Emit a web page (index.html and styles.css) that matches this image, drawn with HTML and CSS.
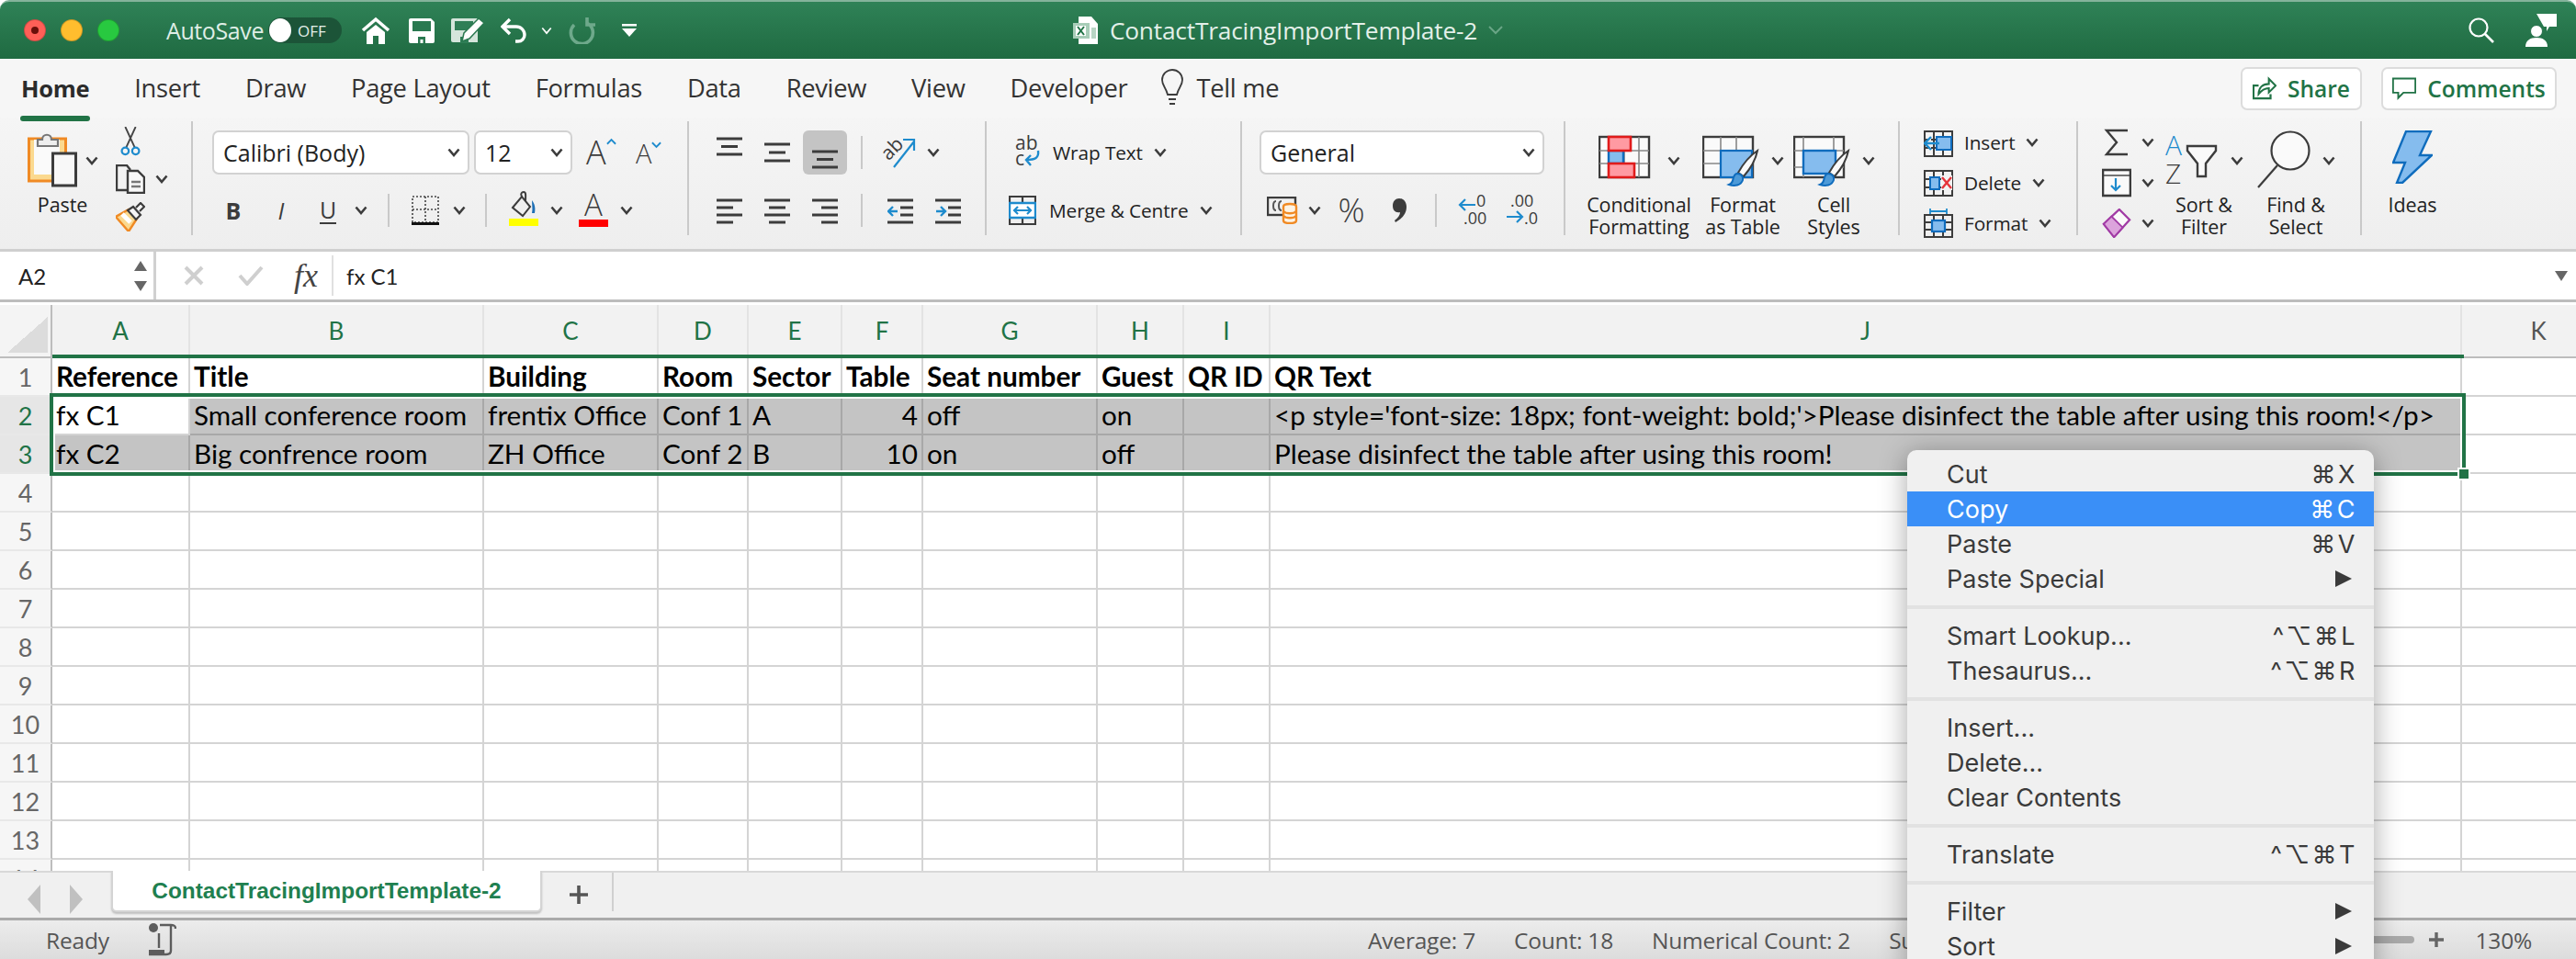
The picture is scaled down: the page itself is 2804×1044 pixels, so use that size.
FILE: index.html
```html
<!DOCTYPE html>
<html lang="en">
<head>
<meta charset="utf-8">
<title>ContactTracingImportTemplate-2</title>
<link rel="stylesheet" href="styles.css">
</head>
<body>
<svg class="sprite" aria-hidden="true">
  <symbol id="chev" viewBox="0 0 14 10"><path d="M1.5 1.5 7 8l5.500-6.500" fill="none" stroke="#3c3c3c" stroke-width="2.6"/></symbol>
  <symbol id="menu-arrow" viewBox="0 0 18 18"><path d="M0 0 18 9 0 18Z" fill="#3a3a3a"/></symbol>
</svg>
<div class="app">
  <header class="titlebar">
    <div class="tb-left">
      <span class="light red"><i></i></span><span class="light amber"></span><span class="light green"></span>
      <span class="autosave">AutoSave</span>
      <span class="toggle"><b></b><em>OFF</em></span>
      <svg class="qa home" viewBox="0 0 32 30"><path d="M2 15 16 3l14 12" fill="none" stroke="#fff" stroke-width="3.600"/><path d="M6 17 16 9l10 8v13h-7v-9h-6v9H6Z" fill="#fff"/></svg>
      <svg class="qa save" viewBox="0 0 28 27"><path d="M2 0h22l4 4v21a2 2 0 0 1-2 2H2a2 2 0 0 1-2-2V2a2 2 0 0 1 2-2Z" fill="#fff"/><rect x="4" y="3" width="20" height="11" fill="#2a7950"/><rect x="8" y="18" width="12" height="9" fill="#fff"/><path d="M10 27v-7h8v7h-2.500v-4h-3v4Z" fill="#2a7950"/></svg>
      <svg class="qa edit" viewBox="0 0 36 28"><path d="M2 1h26l1 1v25H2a2 2 0 0 1-2-2V3a2 2 0 0 1 2-2Z" fill="#d4e5db"/><rect x="4" y="4" width="20" height="10" fill="#2f7e56"/><rect x="10" y="21" width="9" height="7" fill="#2f7e56"/><path d="M30 1l6 5-16 17-8 3 2-9Z" fill="#fff" stroke="#2a7950" stroke-width="1.500"/></svg>
      <svg class="qa undo" viewBox="0 0 30 28"><path d="M10 2 2 10l8 8M2 10h15a9 9 0 0 1 9 9 7 7 0 0 1-7 7h-3" fill="none" stroke="#fff" stroke-width="3.400"/></svg>
      <svg class="qa-chev" viewBox="0 0 14 10"><path d="M1.500 1.500 7 8l5.500-6.500" fill="none" stroke="#fff" stroke-width="2"/></svg>
      <svg class="qa redo" viewBox="0 0 30 30"><path d="M6 9a12 12 0 1 0 14-2M20 1v8h9" fill="none" stroke="#6ea98b" stroke-width="3.600"/></svg>
      <svg class="qa more" viewBox="0 0 16 14"><rect width="16" height="2.500" fill="#fff"/><path d="M0 5h16l-8 9Z" fill="#fff"/></svg>
    </div>
    <div class="tb-title">
      <svg class="doc-icon" viewBox="0 0 28 30"><path d="M6 0h14l7 8v22H6Z" fill="#fff"/><rect y="7" width="18" height="17" fill="#a8cdb8"/><rect x="3" y="10" width="11" height="11" fill="#fff"/><path d="m5 11 7 9m0-9-7 9" stroke="#217346" stroke-width="2"/><path d="M20 12h5v12h-5Z" fill="#b8d5c4"/></svg>
      <span class="doc-name">ContactTracingImportTemplate-2</span>
      <svg class="doc-chev" viewBox="0 0 16 10"><path d="m1 1 7 7 7-7" fill="none" stroke="#6aa586" stroke-width="2"/></svg>
    </div>
    <div class="tb-right">
      <svg class="search" viewBox="0 0 28 28"><circle cx="11" cy="11" r="9.500" fill="none" stroke="#fff" stroke-width="2.200"/><path d="m18 18 9 9" stroke="#fff" stroke-width="2.600"/></svg>
      <svg class="person" viewBox="0 0 34 36"><path d="M12 0h22v14H26l-3 5v-5h-3" fill="#fff"/><circle cx="12" cy="19" r="6.500" fill="#fff" stroke="#24704a" stroke-width="1"/><path d="M0 36c0-7 5-10 12-10s12 3 12 10Z" fill="#fff"/></svg>
    </div>
  </header>

  <nav class="tabs">
    <span class="tab active">Home</span><span class="tab">Insert</span><span class="tab">Draw</span><span class="tab">Page Layout</span><span class="tab">Formulas</span><span class="tab">Data</span><span class="tab">Review</span><span class="tab">View</span><span class="tab">Developer</span>
    <span class="tell">
      <svg class="bulb" viewBox="0 0 24 42"><path d="M7 28C5 20 1 18 1 12a11 11 0 0 1 22 0c0 6-4 8-6 16Z" fill="none" stroke="#3c3c3c" stroke-width="1.800"/><path d="M8 33h8M9 38h6" stroke="#3c3c3c" stroke-width="2.200"/></svg>
      <span class="tab">Tell me</span>
    </span>
    <span class="tab-actions">
      <span class="btn share-btn"><svg class="btn-ico" viewBox="0 0 28 26"><path d="M7 10H1v15h20v-5" fill="none" stroke="#217346" stroke-width="2.400"/><path d="M7 20c0-8 5-12 12-12V2l8 8-8 8v-5c-6 0-9 3-12 7Z" fill="none" stroke="#217346" stroke-width="2.200"/></svg>Share</span>
      <span class="btn comments-btn"><svg class="btn-ico" viewBox="0 0 32 28"><path d="M1 1h30v19H15l-7 7v-7H1Z" fill="none" stroke="#217346" stroke-width="2.400"/></svg>Comments</span>
    </span>
  </nav>

  <section class="ribbon">
    <div class="group g-clip">
      <div class="big">
        <div class="big-top">
          <svg class="i-paste" viewBox="0 0 54 62"><rect x="1.500" y="9" width="40" height="46" fill="#fbd98f" stroke="#f08a24" stroke-width="3"/><rect x="7" y="10" width="28" height="38" fill="#fafafa"/><path d="M11 17V10h5c0-7 10-7 10 0h7v7Z" fill="#eee" stroke="#777" stroke-width="2.200"/><rect x="27.500" y="25" width="25" height="35" fill="#f8f8f8" stroke="#3c3c3c" stroke-width="3"/></svg>
          <svg class="chev chev-up"><use href="#chev"/></svg>
        </div>
        <span class="lbl">Paste</span>
      </div>
      <div class="stack">
        <div class="stack-row"><svg class="i32" viewBox="0 0 32 34"><path d="M10 0 21 24M22 0 11 24" stroke="#444" stroke-width="2" fill="none"/><circle cx="10" cy="28" r="4" fill="none" stroke="#1e8bcd" stroke-width="2.400"/><circle cx="22" cy="28" r="4" fill="none" stroke="#1e8bcd" stroke-width="2.400"/></svg></div>
        <div class="stack-row"><svg class="i32" viewBox="0 0 32 32"><path d="M14 28H1V1h11l4 5" fill="none" stroke="#3c3c3c" stroke-width="2.400"/><path d="M13 7h11l7 7v17H13Z" fill="#f8f8f8" stroke="#3c3c3c" stroke-width="2.400"/><path d="M17 19h10M17 24h10" stroke="#777" stroke-width="2.400"/></svg><svg class="chev chev-copy"><use href="#chev"/></svg></div>
        <div class="stack-row"><svg class="i32" viewBox="0 0 32 32"><path d="M0 16 14 8l9 10-9 14Z" fill="#fbd98f" stroke="#f08a24" stroke-width="2.400"/><path d="M7 13l9 9" stroke="#fff" stroke-width="5"/><path d="M13 9l6-4 8 9-5 5Z" fill="#f5f5f5" stroke="#3c3c3c" stroke-width="2.200"/><path d="M22 6l5-5 4 4-5 5" fill="#f5f5f5" stroke="#3c3c3c" stroke-width="2.200"/></svg></div>
      </div>
    </div>

    <div class="group g-font">
      <div class="row">
        <span class="select s-font">Calibri (Body)<svg class="chev"><use href="#chev"/></svg></span>
        <span class="select s-size">12<svg class="chev"><use href="#chev"/></svg></span>
        <span class="grow-a">A<svg class="caret" viewBox="0 0 12 8"><path d="m1 7 5-5 5 5" fill="none" stroke="#1e8bcd" stroke-width="2"/></svg></span>
        <span class="shrink-a">A<svg class="caret" viewBox="0 0 12 8"><path d="m1 1 5 5 5-5" fill="none" stroke="#1e8bcd" stroke-width="2"/></svg></span>
      </div>
      <div class="row grid-font">
        <span class="fmt bold">B</span><span class="fmt ital">I</span><span class="fmt under">U</span>
        <svg class="chev"><use href="#chev"/></svg><i class="vsep"></i>
        <svg class="i-border" viewBox="0 0 30 46"><path d="M1 8h28v28H1ZM15 8v28M1 22h28" fill="none" stroke="#444" stroke-width="1.600" stroke-dasharray="2 2"/><rect y="36" width="30" height="3" fill="#111"/></svg>
        <svg class="chev"><use href="#chev"/></svg><i class="vsep"></i>
        <svg class="i-fill" viewBox="0 0 32 48"><path d="M4 21 14 9l9 11-8 10Z" fill="none" stroke="#3c3c3c" stroke-width="2"/><path d="M14 9c-2-3 0-5 2-5 3 0 2 5 2 10" fill="none" stroke="#3c3c3c" stroke-width="2"/><path d="M25 13c3 4 4 8 3 14h-3c1-4 0-9 0-14Z" fill="#1e6fb5"/><rect y="33" width="32" height="8" fill="#ff0"/></svg>
        <svg class="chev"><use href="#chev"/></svg>
        <span class="i-color"><span>A</span><i></i></span>
        <svg class="chev"><use href="#chev"/></svg>
      </div>
    </div>

    <div class="group g-align">
      <div class="row grid-align1">
        <svg class="i-al" viewBox="0 0 28 48"><path d="M0 9h28M5 17.500h18M0 26h28" stroke="#3c3c3c" stroke-width="3"/></svg>
        <svg class="i-al" viewBox="0 0 28 48"><path d="M0 15h28M5 24h18M0 33h28" stroke="#3c3c3c" stroke-width="3"/></svg>
        <span class="al-on"><svg class="i-al" viewBox="0 0 28 48"><path d="M0 23h28M5 31.500h18M0 40h28" stroke="#3c3c3c" stroke-width="3"/></svg></span>
        <i class="vsep"></i>
        <svg class="i-orient" viewBox="0 0 36 34"><text class="svg-t" x="0" y="22" transform="rotate(-45 8 18)">ab</text><path d="M11 33 33 5M21 3h12v12" fill="none" stroke="#1e8bcd" stroke-width="2.200"/></svg>
        <svg class="chev"><use href="#chev"/></svg>
      </div>
      <div class="row grid-align2">
        <svg class="i-al" viewBox="0 0 28 48"><path d="M0 13h28M0 21h18M0 29h28M0 37h18" stroke="#3c3c3c" stroke-width="3"/></svg>
        <svg class="i-al" viewBox="0 0 28 48"><path d="M0 13h28M5 21h18M0 29h28M5 37h18" stroke="#3c3c3c" stroke-width="3"/></svg>
        <svg class="i-al" viewBox="0 0 28 48"><path d="M0 13h28M10 21h18M0 29h28M10 37h18" stroke="#3c3c3c" stroke-width="3"/></svg>
        <i class="vsep"></i>
        <svg class="i-al" viewBox="0 0 28 48"><path d="M0 13h28M14 21h14M14 29h14M0 37h28" stroke="#3c3c3c" stroke-width="3"/><path d="M11 25H1m5-5-5 5 5 5" fill="none" stroke="#1e8bcd" stroke-width="2.400"/></svg>
        <svg class="i-al" viewBox="0 0 28 48"><path d="M0 13h28M14 21h14M14 29h14M0 37h28" stroke="#3c3c3c" stroke-width="3"/><path d="M1 25h10m-5-5 5 5-5 5" fill="none" stroke="#1e8bcd" stroke-width="2.400"/></svg>
      </div>
    </div>

    <div class="group g-wrap">
      <div class="row flexrow">
        <svg class="i-wrap" viewBox="0 0 30 34"><text class="svg-t" x="3" y="14">ab</text><text class="svg-t" x="3" y="31">c</text><path d="M28 15c1 8-3 10-13 10m5-5-5 5 5 6" fill="none" stroke="#1e8bcd" stroke-width="2.400"/></svg>
        <span class="lbl-s">Wrap Text</span><svg class="chev"><use href="#chev"/></svg>
      </div>
      <div class="row flexrow">
        <svg class="i-merge" viewBox="0 0 30 32"><path d="M1 1h28v30H1ZM15 1v7M15 25v6" fill="none" stroke="#3c3c3c" stroke-width="2.200"/><path d="M1 8h28v16H1Z" fill="#fff" stroke="#1e8bcd" stroke-width="2.400"/><path d="M6 16h18M10 12l-4 4 4 4M20 12l4 4-4 4" fill="none" stroke="#1e8bcd" stroke-width="2.200"/></svg>
        <span class="lbl-s">Merge &amp; Centre</span><svg class="chev"><use href="#chev"/></svg>
      </div>
    </div>

    <div class="group g-num">
      <div class="row">
        <span class="select s-num">General<svg class="chev"><use href="#chev"/></svg></span>
      </div>
      <div class="row grid-num">
        <svg class="i-acct" viewBox="0 0 34 30"><rect x="1" y="1" width="30" height="19" fill="none" stroke="#3c3c3c" stroke-width="2.400"/><path d="M10 5c-4 0-4 10 0 10M16 5c-4 0-4 10 0 10" fill="none" stroke="#555" stroke-width="2"/><path d="M18 11c0-4 14-4 14 0v15c0 4-14 4-14 0Z" fill="#fdf3e4" stroke="#f08a24" stroke-width="2.400"/><path d="M18 16c3 3 11 3 14 0M18 21c3 3 11 3 14 0" fill="none" stroke="#f08a24" stroke-width="2.400"/></svg>
        <svg class="chev"><use href="#chev"/></svg>
        <span class="pct">%</span>
        <svg class="i-comma" viewBox="0 0 16 26"><path d="M7 0c5 0 8 4 8 9 0 8-5 13-12 17l-1-2c4-3 6-6 6-9-5 1-8-2-8-7 0-5 3-8 7-8Z" fill="#3c3c3c"/></svg>
        <i class="vsep"></i>
        <svg class="i-dec" viewBox="0 0 34 36"><text class="svg-s" x="20" y="14">0</text><text class="svg-s" x="6" y="33">.00</text><path d="M19 12H2m6-6-6 6 6 6" fill="none" stroke="#1e8bcd" stroke-width="2.200"/></svg>
        <svg class="i-dec" viewBox="0 0 34 36"><text class="svg-s" x="5" y="14">.00</text><text class="svg-s" x="20" y="33">.0</text><path d="M1 25h17m-6-6 6 6-6 6" fill="none" stroke="#1e8bcd" stroke-width="2.200"/></svg>
      </div>
    </div>

    <div class="group g-styles">
      <div class="big">
        <div class="big-top">
          <svg class="i-style" viewBox="0 0 62 62"><rect x="1" y="7" width="54" height="44" fill="#fafafa" stroke="#3c3c3c" stroke-width="2.400"/><path d="M11 7v44M44 7v44M1 22h54M1 36h54M28 22v14" stroke="#888" stroke-width="1.600"/><rect x="11" y="22" width="16" height="14" fill="#85bcee" stroke="#0f6cbd" stroke-width="2.400"/><rect x="11" y="7" width="24" height="15" fill="#ff9aa2" stroke="#e01b1b" stroke-width="2.600"/><rect x="11" y="36" width="28" height="15" fill="#ff9aa2" stroke="#e01b1b" stroke-width="2.600"/></svg>
          <svg class="chev chev-big"><use href="#chev"/></svg>
        </div>
        <span class="lbl">Conditional<br>Formatting</span>
      </div>
      <div class="big">
        <div class="big-top">
          <svg class="i-style" viewBox="0 0 62 62"><rect x="1" y="7" width="54" height="44" fill="#fafafa" stroke="#3c3c3c" stroke-width="2.400"/><path d="M20 7v44M37 7v44M1 22h54M1 36h54" stroke="#888" stroke-width="1.600"/><rect x="20" y="22" width="34" height="29" fill="#85bcee" stroke="#0f6cbd" stroke-width="2.200"/><path d="M60 22c-2 10-8 20-15 28l-6-4c5-9 12-18 21-24Z" fill="#fafafa" stroke="#3c3c3c" stroke-width="2"/><path d="M38 47c4 0 7 3 6 7-2 6-9 7-15 5 5-2 4-6 5-8 1-3 2-4 4-4Z" fill="#4d9ad8" stroke="#0f6cbd" stroke-width="2"/></svg>
          <svg class="chev chev-big"><use href="#chev"/></svg>
        </div>
        <span class="lbl">Format<br>as Table</span>
      </div>
      <div class="big">
        <div class="big-top">
          <svg class="i-style" viewBox="0 0 62 62"><rect x="1" y="7" width="54" height="44" fill="#fafafa" stroke="#3c3c3c" stroke-width="2.400"/><path d="M11 7v44M44 7v44M1 22h54M1 40h54" stroke="#888" stroke-width="1.600"/><rect x="11" y="22" width="35" height="25" fill="#85bcee" stroke="#0f6cbd" stroke-width="2.400"/><path d="M60 22c-2 10-8 20-15 28l-6-4c5-9 12-18 21-24Z" fill="#fafafa" stroke="#3c3c3c" stroke-width="2"/><path d="M38 47c4 0 7 3 6 7-2 6-9 7-15 5 5-2 4-6 5-8 1-3 2-4 4-4Z" fill="#4d9ad8" stroke="#0f6cbd" stroke-width="2"/></svg>
          <svg class="chev chev-big"><use href="#chev"/></svg>
        </div>
        <span class="lbl">Cell<br>Styles</span>
      </div>
    </div>

    <div class="group g-cells">
      <div class="stack-row tall"><svg class="i-cell" viewBox="0 0 32 32"><path d="M1 4h30v27H1ZM11 4v27M21 4v27M1 13h30M1 22h30" fill="none" stroke="#3c3c3c" stroke-width="2"/><rect x="14" y="10" width="16" height="14" fill="#85bcee" stroke="#0f6cbd" stroke-width="2"/><path d="M17 17H1m7-7-7 7 7 7" fill="#eee" stroke="#1e8bcd" stroke-width="2.400"/></svg><span class="lbl-s">Insert</span><svg class="chev"><use href="#chev"/></svg></div>
      <div class="stack-row tall"><svg class="i-cell" viewBox="0 0 32 32"><path d="M1 3h30v27H1ZM11 3v27M21 3v27M1 12h30M1 21h30" fill="none" stroke="#3c3c3c" stroke-width="2"/><rect x="7" y="10" width="10" height="13" fill="#85bcee" stroke="#0f6cbd" stroke-width="2"/><rect x="19" y="8" width="12" height="16" fill="#f2f2f2"/><path d="m20 10 10 12m0-12-10 12" stroke="#e5333a" stroke-width="2.400"/></svg><span class="lbl-s">Delete</span><svg class="chev"><use href="#chev"/></svg></div>
      <div class="stack-row tall"><svg class="i-cell" viewBox="0 0 32 32"><path d="M1 7h30v24H1ZM11 7v24M21 7v24M1 15h30M1 23h30" fill="none" stroke="#3c3c3c" stroke-width="2"/><rect x="9" y="13" width="14" height="12" fill="#85bcee" stroke="#0f6cbd" stroke-width="2.200"/><path d="M7 3h18M7 0v6M25 0v6" fill="none" stroke="#1e8bcd" stroke-width="1.800"/></svg><span class="lbl-s">Format</span><svg class="chev"><use href="#chev"/></svg></div>
    </div>

    <div class="group g-edit">
      <div class="stack edit-stack">
        <div class="stack-row tall"><svg class="i-cell" viewBox="0 0 32 32"><path d="M28 3H5l11 13L5 29h23" fill="none" stroke="#3c3c3c" stroke-width="2.400"/></svg><svg class="chev chev-edit"><use href="#chev"/></svg></div>
        <div class="stack-row tall"><svg class="i-cell" viewBox="0 0 32 32"><rect x="1" y="2" width="30" height="28" fill="#fafafa" stroke="#3c3c3c" stroke-width="2.600"/><path d="M1 8h30" stroke="#3c3c3c" stroke-width="1.400"/><path d="M15 11v13m-5-5 5 5 5-5" fill="none" stroke="#1e8bcd" stroke-width="2.200"/></svg><svg class="chev chev-edit"><use href="#chev"/></svg></div>
        <div class="stack-row tall"><svg class="i-cell" viewBox="0 0 32 34"><path d="M1 18 19 1l12 12L13 33Z" fill="#fafafa" stroke="#a13ba5" stroke-width="2.400"/><path d="M1 18 10 9l13 13-10 11Z" fill="#dca3dc" stroke="#a13ba5" stroke-width="2"/></svg><svg class="chev chev-edit"><use href="#chev"/></svg></div>
      </div>
      <div class="big">
        <div class="big-top">
          <svg class="i-sort" viewBox="0 0 58 62"><text class="svg-az blue" x="0" y="27">A</text><text class="svg-az" x="0" y="58">Z</text><path d="M24 17h31v5L44 36v14h-9V36L24 22Z" fill="#fafafa" stroke="#3c3c3c" stroke-width="2.400"/></svg>
          <svg class="chev chev-big"><use href="#chev"/></svg>
        </div>
        <span class="lbl">Sort &amp;<br>Filter</span>
      </div>
      <div class="big">
        <div class="big-top">
          <svg class="i-find" viewBox="0 0 58 66"><circle cx="36" cy="22" r="20.500" fill="#fafafa" stroke="#3c3c3c" stroke-width="2.200"/><path d="M22 38 1 62" stroke="#3c3c3c" stroke-width="2.200"/></svg>
          <svg class="chev chev-big"><use href="#chev"/></svg>
        </div>
        <span class="lbl">Find &amp;<br>Select</span>
      </div>
    </div>

    <div class="group g-ideas">
      <div class="big">
        <div class="big-top">
          <svg class="i-bolt" viewBox="0 0 44 58"><path d="M15 1h27L30 27h13L11 57H5l9-22H1Z" fill="#85bcee" stroke="#0f6cbd" stroke-width="2.400"/></svg>
        </div>
        <span class="lbl">Ideas</span>
      </div>
    </div>
  </section>

  <section class="formula">
    <div class="namebox"><span>A2</span><span class="spin"><i class="up"></i><i class="down"></i></span></div>
    <div class="f-tools">
      <svg class="f-x" viewBox="0 0 22 22"><path d="m2 2 18 18M20 2 2 20" stroke="#cfcfcf" stroke-width="4"/></svg>
      <svg class="f-check" viewBox="0 0 28 22"><path d="m2 11 8 9L26 2" fill="none" stroke="#cfcfcf" stroke-width="4"/></svg>
      <span class="f-fx">fx</span>
    </div>
    <div class="f-input">fx C1</div>
    <i class="f-drop"></i>
  </section>

  <section class="sheet">
    <div class="grid">
      <div class="corner"><i></i></div>
      <div class="ch">A</div><div class="ch">B</div><div class="ch">C</div><div class="ch">D</div><div class="ch">E</div><div class="ch">F</div><div class="ch">G</div><div class="ch">H</div><div class="ch">I</div><div class="ch">J</div><div class="ch off">K</div>

      <div class="rh">1</div><div class="c b">Reference</div><div class="c b">Title</div><div class="c b">Building</div><div class="c b">Room</div><div class="c b">Sector</div><div class="c b">Table</div><div class="c b">Seat number</div><div class="c b">Guest</div><div class="c b">QR ID</div><div class="c b">QR Text</div><div class="c"></div>

      <div class="rh on">2</div><div class="c">fx C1</div><div class="c s">Small conference room</div><div class="c s">frentix Office</div><div class="c s">Conf 1</div><div class="c s">A</div><div class="c s n">4</div><div class="c s">off</div><div class="c s">on</div><div class="c s"></div><div class="c s">&lt;p style='font-size: 18px; font-weight: bold;'&gt;Please disinfect the table after using this room!&lt;/p&gt;</div><div class="c"></div>

      <div class="rh on">3</div><div class="c s">fx C2</div><div class="c s">Big confrence room</div><div class="c s">ZH Office</div><div class="c s">Conf 2</div><div class="c s">B</div><div class="c s n">10</div><div class="c s">on</div><div class="c s">off</div><div class="c s"></div><div class="c s">Please disinfect the table after using this room!</div><div class="c"></div>

      <div class="rh">4</div><div class="c"></div><div class="c"></div><div class="c"></div><div class="c"></div><div class="c"></div><div class="c"></div><div class="c"></div><div class="c"></div><div class="c"></div><div class="c"></div><div class="c"></div>
      <div class="rh">5</div><div class="c"></div><div class="c"></div><div class="c"></div><div class="c"></div><div class="c"></div><div class="c"></div><div class="c"></div><div class="c"></div><div class="c"></div><div class="c"></div><div class="c"></div>
      <div class="rh">6</div><div class="c"></div><div class="c"></div><div class="c"></div><div class="c"></div><div class="c"></div><div class="c"></div><div class="c"></div><div class="c"></div><div class="c"></div><div class="c"></div><div class="c"></div>
      <div class="rh">7</div><div class="c"></div><div class="c"></div><div class="c"></div><div class="c"></div><div class="c"></div><div class="c"></div><div class="c"></div><div class="c"></div><div class="c"></div><div class="c"></div><div class="c"></div>
      <div class="rh">8</div><div class="c"></div><div class="c"></div><div class="c"></div><div class="c"></div><div class="c"></div><div class="c"></div><div class="c"></div><div class="c"></div><div class="c"></div><div class="c"></div><div class="c"></div>
      <div class="rh">9</div><div class="c"></div><div class="c"></div><div class="c"></div><div class="c"></div><div class="c"></div><div class="c"></div><div class="c"></div><div class="c"></div><div class="c"></div><div class="c"></div><div class="c"></div>
      <div class="rh">10</div><div class="c"></div><div class="c"></div><div class="c"></div><div class="c"></div><div class="c"></div><div class="c"></div><div class="c"></div><div class="c"></div><div class="c"></div><div class="c"></div><div class="c"></div>
      <div class="rh">11</div><div class="c"></div><div class="c"></div><div class="c"></div><div class="c"></div><div class="c"></div><div class="c"></div><div class="c"></div><div class="c"></div><div class="c"></div><div class="c"></div><div class="c"></div>
      <div class="rh">12</div><div class="c"></div><div class="c"></div><div class="c"></div><div class="c"></div><div class="c"></div><div class="c"></div><div class="c"></div><div class="c"></div><div class="c"></div><div class="c"></div><div class="c"></div>
      <div class="rh">13</div><div class="c"></div><div class="c"></div><div class="c"></div><div class="c"></div><div class="c"></div><div class="c"></div><div class="c"></div><div class="c"></div><div class="c"></div><div class="c"></div><div class="c"></div>
      <div class="rh">14</div><div class="c"></div><div class="c"></div><div class="c"></div><div class="c"></div><div class="c"></div><div class="c"></div><div class="c"></div><div class="c"></div><div class="c"></div><div class="c"></div><div class="c"></div>
    </div>
    <div class="sel-top"></div>
    <div class="sel-box"><i class="handle"></i></div>
  </section>

  <section class="sheetbar">
    <span class="nav-arrows"><i class="nav-l"></i><i class="nav-r"></i></span>
    <span class="sheet-tab">ContactTracingImportTemplate-2</span>
    <svg class="plus" viewBox="0 0 20 20"><path d="M10 0v20M0 10h20" stroke="#555" stroke-width="3.600"/></svg>
    <i class="bar-sep"></i>
  </section>

  <footer class="status">
    <div class="st-left">
      <span>Ready</span>
      <svg class="macro" viewBox="0 0 30 38"><circle cx="5" cy="6" r="5" fill="#5c5c5c"/><path d="M12 3h12c4 0 5 1 5 4M24 3v28c0 3-2 4-5 4H1v-5M11 12v16" fill="none" stroke="#5c5c5c" stroke-width="2.400"/><path d="M0 30h17v5H0Z" fill="#5c5c5c"/></svg>
    </div>
    <div class="st-sum"><span>Average: 7</span><span>Count: 18</span><span>Numerical Count: 2</span><span>Sum: 14</span></div>
    <div class="st-zoom"><i class="slider"></i><svg class="z-plus" viewBox="0 0 16 16"><path d="M8 0v16M0 8h16" stroke="#666" stroke-width="3.400"/></svg><span>130%</span></div>
  </footer>

  <div class="menu">
    <div class="mi"><span>Cut</span><span class="key">⌘X</span></div>
    <div class="mi hl"><span>Copy</span><span class="key">⌘C</span></div>
    <div class="mi"><span>Paste</span><span class="key">⌘V</span></div>
    <div class="mi"><span>Paste Special</span><svg class="sub"><use href="#menu-arrow"/></svg></div>
    <hr>
    <div class="mi"><span>Smart Lookup...</span><span class="key">^⌥⌘L</span></div>
    <div class="mi"><span>Thesaurus...</span><span class="key">^⌥⌘R</span></div>
    <hr>
    <div class="mi"><span>Insert...</span></div>
    <div class="mi"><span>Delete...</span></div>
    <div class="mi"><span>Clear Contents</span></div>
    <hr>
    <div class="mi"><span>Translate</span><span class="key">^⌥⌘T</span></div>
    <hr>
    <div class="mi"><span>Filter</span><svg class="sub"><use href="#menu-arrow"/></svg></div>
    <div class="mi"><span>Sort</span><svg class="sub"><use href="#menu-arrow"/></svg></div>
  </div>
</div>
</body>
</html>
```

FILE: styles.css
```css
* { box-sizing: border-box; }
html, body { margin: 0; height: 100%; background: #fff; }
body { overflow: hidden; font-family: "Open Sans", "Noto Sans", sans-serif; color: #222; }
i { display: block; font-style: normal; }
.sprite { display: none; }
.app { position: relative; width: 2804px; height: 1044px; overflow: hidden; display: flex; flex-direction: column; }

/* title bar */
.titlebar { height: 64px; flex: none; display: grid; grid-template-columns: 1fr auto 1fr; align-items: center; background: linear-gradient(#2f8257, #1f6a41); border-top: 2px solid #84b39b; border-radius: 10px 10px 0 0; color: #fff; }
.tb-left { display: flex; align-items: center; padding-left: 26px; height: 100%; }
.light { width: 24px; height: 24px; border-radius: 50%; margin-right: 16px; flex: none; display: flex; align-items: center; justify-content: center; border: 1px solid rgba(0,0,0,.2); }
.red { background: #ff5f57; }
.red i { width: 8px; height: 8px; border-radius: 50%; background: #6a0f0a; }
.amber { background: #ffbd2e; }
.green { background: #28c940; margin-right: 51px; }
.autosave { font-size: 25px; width: 111px; color: #dfeee6; letter-spacing: -.4px; white-space: nowrap; }
.toggle { width: 80px; height: 28px; border-radius: 14px; background: #1c5438; display: flex; align-items: center; margin-right: 21px; flex: none; }
.toggle b { width: 24px; height: 26px; border-radius: 50%; background: #fff; margin-left: 1px; }
.toggle em { font-style: normal; font-size: 17px; margin-left: 7px; color: #e3efe9; }
.qa { flex: none; }
.home { width: 32px; height: 30px; margin-right: 20px; }
.save { width: 28px; height: 27px; margin-right: 18px; }
.edit { width: 36px; height: 28px; margin-right: 18px; }
.undo { width: 30px; height: 28px; margin-right: 14px; }
.qa-chev { width: 12px; height: 9px; margin-right: 18px; }
.redo { width: 30px; height: 30px; margin-right: 28px; }
.more { width: 16px; height: 14px; }
.tb-title { display: flex; align-items: center; gap: 12px; }
.doc-icon { width: 28px; height: 30px; }
.doc-name { font-size: 26.300px; color: #e3f0e9; letter-spacing: -.2px; }
.doc-chev { width: 16px; height: 10px; }
.tb-right { display: flex; justify-content: flex-end; align-items: center; gap: 34px; padding-right: 21px; }
.search { width: 28px; height: 28px; }
.person { width: 34px; height: 36px; }

/* tabs */
.tabs { height: 64px; flex: none; display: flex; align-items: center; gap: 49px; padding: 0 21px 0 23px; background: #f6f6f6; }
.tab { font-size: 27.300px; color: #333; position: relative; line-height: 40px; letter-spacing: -.3px; white-space: nowrap; }
.tab.active { font-size: 25.500px; font-weight: 700; color: #2b2b2b; }
.tab.active::after { content: ""; position: absolute; left: -1px; right: -1px; bottom: -16px; height: 6px; border-radius: 3px; background: #217346; }
.tell { display: flex; align-items: center; gap: 14px; margin-left: -12px; }
.bulb { width: 24px; height: 42px; }
.tab-actions { margin-left: auto; display: flex; gap: 21px; }
.btn { display: flex; align-items: center; justify-content: center; gap: 12px; height: 47px; background: #fff; border: 2px solid #dcdcdc; border-radius: 7px; color: #217346; font-size: 24.500px; font-weight: 600; }
.share-btn { width: 132px; }
.comments-btn { width: 191px; }
.btn-ico { width: 26px; height: 26px; flex: none; }

/* ribbon */
.ribbon { height: 146px; flex: none; display: flex; padding-top: 4px; background: linear-gradient(#f5f5f5, #eeeeee); border-bottom: 3px solid #cfcfcf; }
.group { height: 124px; border-right: 2px solid #c9c9c9; padding-top: 10px; flex: none; }
.row { height: 48px; align-items: center; }
.row + .row { margin-top: 15px; }
.g-font .row:first-child, .g-num .row:first-child { display: flex; }
.chev { width: 14px; height: 10px; flex: none; display: block; }
.vsep { width: 2px; height: 36px; background: #c9c9c9; }
.lbl { display: block; font-size: 21.500px; line-height: 24px; text-align: center; color: #222; white-space: nowrap; letter-spacing: -.1px; }
.lbl-s { font-size: 20.800px; color: #222; white-space: nowrap; letter-spacing: -.1px; }
.big { display: flex; flex-direction: column; align-items: center; }
.big-top { height: 69px; display: flex; align-items: flex-start; flex: none; }
.stack { display: flex; flex-direction: column; }
.stack-row { display: flex; align-items: center; height: 44px; }

.g-clip { width: 210px; display: flex; padding-left: 20px; padding-top: 10px; }
.g-clip .big { width: 96px; }
.g-clip .stack { margin: -9px 0 0 10px; }
.i-paste { width: 54px; height: 62px; }
.chev-up { margin: 28px 0 0 9px; }
.i32 { width: 32px; height: 32px; flex: none; }
.chev-copy { margin-left: 11px; }

.g-font { width: 540px; padding-left: 21px; }
.select { display: flex; align-items: center; justify-content: space-between; height: 48px; padding: 0 8px 0 10px; background: #fff; border: 2px solid #d2d2d2; border-radius: 7px; font-size: 25px; color: #222; flex: none; }
.s-font { width: 280px; margin-right: 5px; }
.s-size { width: 107px; margin-right: 15px; }
.s-num { width: 310px; }
.grow-a, .shrink-a { display: flex; font-weight: 300; color: #3c3c3c; line-height: 1; }
.grow-a { font-size: 36px; width: 54px; }
.shrink-a { font-size: 29px; align-items: flex-end; }
.caret { width: 11px; height: 8px; margin-top: 2px; }
.shrink-a .caret { align-self: flex-start; }
.grid-font { display: grid; grid-template-columns: 46px 58px 44px 28px 32px 48px 26px 32px 50px 22px 58px 14px; justify-items: center; }
.fmt { font-size: 25px; color: #3c3c3c; line-height: 30px; }
.bold { font-weight: 700; }
.ital { font-style: italic; }
.under { border-bottom: 2px solid #3c3c3c; line-height: 28px; }
.i-border { width: 30px; height: 46px; }
.i-fill { width: 32px; height: 48px; }
.i-color { display: flex; flex-direction: column; align-items: center; width: 32px; font-size: 33px; font-weight: 300; line-height: 32px; color: #3c3c3c; }
.i-color i { width: 32px; height: 8px; margin-bottom: 4px; background: #f00; }

.g-align { width: 324px; padding-left: 18px; }
.grid-align1, .grid-align2 { display: grid; justify-items: center; }
.grid-align1 { grid-template-columns: 52px 52px 52px 28px 56px 16px; }
.grid-align2 { grid-template-columns: 52px 52px 52px 28px 56px 48px; }
.i-al { width: 28px; height: 48px; display: block; }
.al-on { width: 48px; height: 48px; background: #c4c4c4; border-radius: 6px; display: flex; justify-content: center; }
.i-orient, .i-wrap, .i-sort, .i-dec { overflow: visible; }
.i-orient { width: 36px; height: 34px; }
.svg-t { font: 21px "Open Sans", sans-serif; fill: #3c3c3c; }
.svg-s { font: 18px "Open Sans", sans-serif; fill: #3c3c3c; }
.svg-az { font: 300 30px "Open Sans", sans-serif; fill: #3c3c3c; }
.svg-az.blue { fill: #1e8bcd; }

.g-wrap { width: 278px; padding-left: 24px; }
.flexrow { display: flex; }
.flexrow .chev { margin-left: 12px; }
.i-wrap { width: 30px; height: 34px; margin: 0 14px 0 4px; flex: none; }
.i-merge { width: 30px; height: 32px; margin: 0 14px 0 0; flex: none; }

.g-num { width: 352px; padding-left: 19px; }
.grid-num { display: grid; grid-template-columns: 50px 20px 60px 46px 32px 50px 54px; justify-items: center; }
.i-acct { width: 34px; height: 30px; }
.pct { font-size: 36px; font-weight: 300; color: #3c3c3c; line-height: 1; }
.i-comma { width: 16px; height: 26px; }
.i-dec { width: 34px; height: 36px; }

.g-styles { width: 364px; display: grid; grid-template-columns: 128px 98px 100px; padding-left: 16px; }
.i-style { width: 62px; height: 62px; flex: none; }
.chev-big { margin: 28px 0 0 13px; }

.g-cells { width: 194px; padding: 1px 0 0 26px; }
.tall .lbl-s { margin: 0 12px; }
.i-cell { width: 32px; height: 32px; flex: none; }

.g-edit { width: 309px; display: grid; grid-template-columns: 61px 100px 100px; padding: 1px 0 0 26px; }
.chev-edit { margin-left: 11px; }
.g-edit .big { padding-top: 9px; }
.i-sort { width: 58px; height: 62px; flex: none; }
.i-find { width: 58px; height: 66px; flex: none; }

.g-ideas { border: 0; padding-left: 25px; width: 110px; }
.g-ideas .big { width: 60px; }
.i-bolt { width: 44px; height: 58px; }

/* formula bar */
.formula { height: 55px; flex: none; display: flex; align-items: center; background: #fff; border-bottom: 3px solid #bdbdbd; position: relative; }
.namebox { width: 170px; height: 52px; display: flex; align-items: center; justify-content: space-between; padding: 0 7px 0 20px; border-right: 3px solid #d0d0d0; font: 24px "Lato", sans-serif; color: #222; }
.spin { display: flex; flex-direction: column; gap: 11px; }
.up { border: solid transparent; border-width: 0 7px 11px; border-bottom-color: #666; }
.down { border: solid transparent; border-width: 11px 7px 0; border-top-color: #666; }
.f-tools { display: flex; align-items: center; width: 193px; height: 44px; padding-left: 30px; border-right: 2px solid #e0e0e0; flex: none; }
.f-x { width: 22px; height: 22px; margin-right: 37px; }
.f-check { width: 28px; height: 22px; margin-right: 33px; }
.f-fx { font: italic 36px "Liberation Serif", serif; color: #444; }
.f-input { padding-left: 14px; font: 24px "Lato", sans-serif; color: #222; }
.f-drop { margin-left: auto; margin-right: 9px; border: solid transparent; border-width: 11px 7px 0; border-top-color: #666; }

/* sheet */
.sheet { flex: 1; min-height: 0; margin-top: 3px; overflow: hidden; position: relative; }
.grid { display: grid; grid-template-columns: 57px 150px 320px 190px 98px 102px 88px 190px 94px 94px 1297px 168px; grid-template-rows: 58px repeat(14, 42px); }
.corner { background: #f4f4f4; border-right: 2px solid #bdbdbd; border-bottom: 2px solid #bdbdbd; padding: 13px 0 0 8px; }
.corner i { width: 44px; height: 39px; background: linear-gradient(to bottom right, transparent 50%, #dcdcdc 50%); }
.ch { background: #f2f2f2; border-right: 2px solid #e3e3e3; border-bottom: 2px solid #bdbdbd; display: flex; align-items: center; justify-content: center; font: 26px "Lato", sans-serif; color: #217346; }
.ch.off { color: #555; }
.rh { background: #f6f6f6; border-right: 2px solid #bdbdbd; border-bottom: 2px solid #e8e8e8; display: flex; align-items: center; justify-content: center; font: 27px "Lato", sans-serif; color: #666; }
.rh.on { background: #e6e6e6; color: #217346; }
.c { border-right: 2px solid #d4d4d4; border-bottom: 2px solid #d4d4d4; padding: 0 0 0 4px; font: 29.700px/40px "Lato", sans-serif; color: #000; white-space: nowrap; }
.c.b { font-weight: 700; }
.c.s { background: #c4c4c4; border-color: #a8a8a8; }
.c.n { text-align: right; padding-right: 4px; }
.sel-top { position: absolute; left: 57px; right: 122px; top: 54px; height: 4px; background: #217346; }
.sel-box { position: absolute; left: 54px; top: 96px; width: 2630px; height: 90px; border: 4px solid #217346; box-shadow: inset 0 0 0 2px #fff; }
.handle { position: absolute; right: -7px; bottom: -7px; width: 10px; height: 10px; background: #217346; outline: 2px solid #fff; }

/* sheet tab bar */
.sheetbar { height: 54px; flex: none; display: flex; align-items: flex-start; background: #f0f0f0; border-top: 2px solid #d8d8d8; border-bottom: 3px solid #aaaaaa; }
.nav-arrows { width: 121px; display: flex; gap: 32px; padding: 13px 0 0 30px; }
.nav-l { border: solid transparent; border-width: 16px 14px 16px 0; border-right-color: #c0c0c0; }
.nav-r { border: solid transparent; border-width: 16px 0 16px 14px; border-left-color: #c0c0c0; }
.sheet-tab { width: 469px; height: 45px; margin-top: -2px; background: #fff; border: 2px solid #d4d4d4; border-top: 0; border-radius: 0 0 6px 6px; box-shadow: 0 2px 2px rgba(0,0,0,.2); text-align: center; font: 700 24.400px/44px "Liberation Sans", sans-serif; color: #1f8050; }
.plus { width: 20px; height: 20px; margin: 14px 0 0 30px; }
.bar-sep { width: 2px; height: 42px; margin-left: 26px; background: #d0d0d0; }

/* status bar */
.status { height: 42px; flex: none; display: grid; grid-template-columns: 1489px 1fr auto; align-items: center; background: linear-gradient(#ececec, #dcdcdc); font-size: 24.500px; color: #555; letter-spacing: -.2px; }
.st-left { display: flex; align-items: center; gap: 43px; padding-left: 50px; }
.macro { width: 30px; height: 38px; }
.st-sum { display: flex; gap: 42px; white-space: nowrap; }
.st-zoom { display: flex; align-items: center; padding-right: 48px; }
.slider { width: 100px; height: 8px; background: #a9a9a9; border-radius: 4px; margin-right: 16px; }
.z-plus { width: 16px; height: 16px; margin-right: 35px; }

/* context menu */
.menu { position: absolute; left: 2076px; top: 490px; width: 508px; height: 570px; padding-top: 7px; background: #f0f0f0; border-radius: 10px 10px 0 0; box-shadow: 0 4px 30px rgba(0,0,0,.35); font: 27px "Inter", "DejaVu Sans", sans-serif; color: #3a3a3a; }
.mi { display: flex; align-items: center; justify-content: space-between; height: 38px; padding: 0 20px 0 43px; font-family: "Inter", "DejaVu Sans", sans-serif; }
.mi.hl { background: #3a8ff7; color: #fff; }
.key { letter-spacing: 2.500px; margin-right: -2px; }
.menu hr { height: 4px; margin: 10px 0; border: 0; background: #e2e2e2; }
.sub { width: 18px; height: 18px; margin-right: 4px; }
```
